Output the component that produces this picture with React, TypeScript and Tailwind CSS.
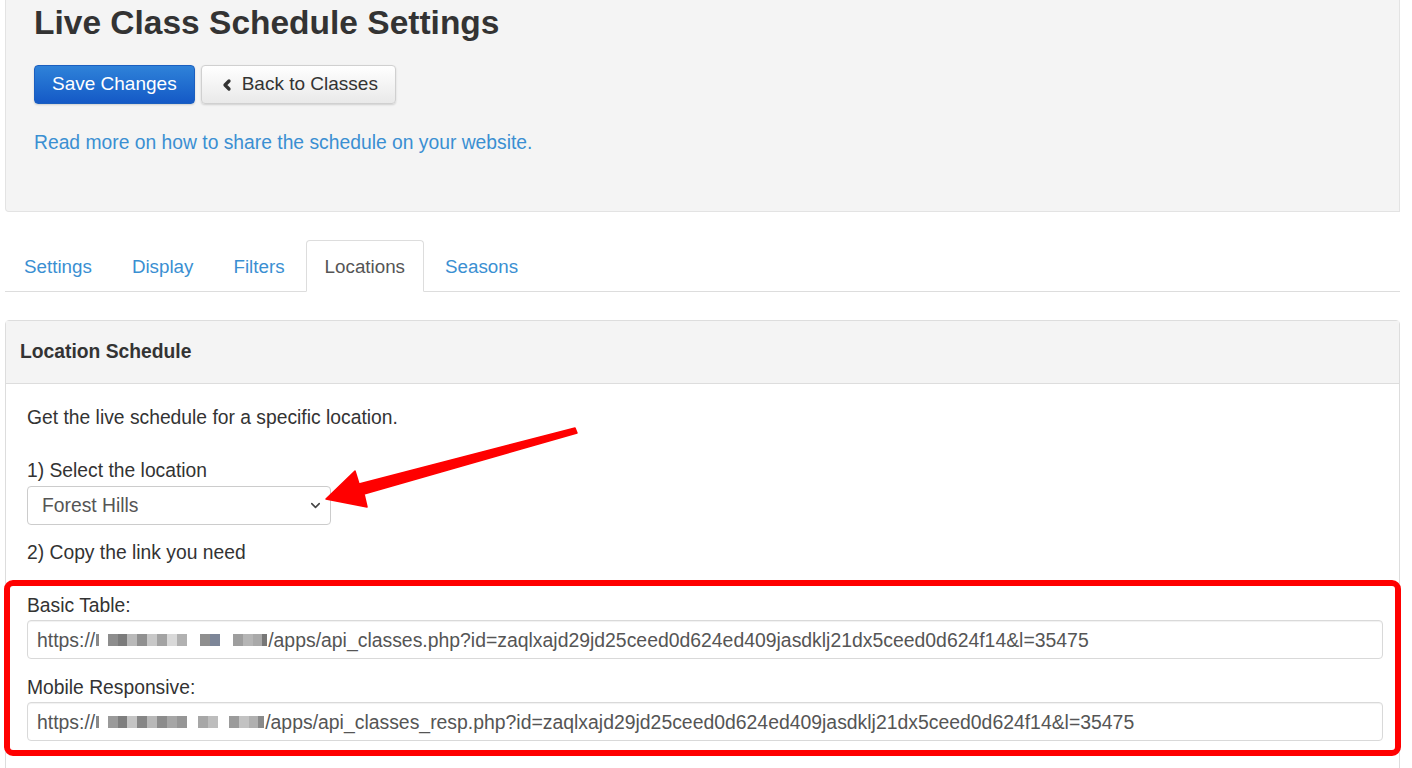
import React from 'react';
import { ChevronLeft, ChevronDown } from 'lucide-react';

const font = { fontFamily: '"Liberation Sans", Arial, sans-serif' };

// pixelated (redacted) domain part of the urls
const blurA: [number, string][] = [
  [3, '#8a8a8a'], [9, '#ffffff'], [10, '#8d8d8d'], [9, '#7b7b7b'], [10, '#b9b9b9'], [10, '#909090'],
  [10, '#c8c8c8'], [10, '#a3a3a3'], [10, '#d9d9d9'], [10, '#b1b1b1'], [13, '#ffffff'], [10, '#8f8f8f'],
  [10, '#7d8698'], [13, '#ffffff'], [10, '#9e9e9e'], [10, '#b5b5b5'], [9, '#a9a9a9'], [5, '#777777'],
];
const blurB: [number, string][] = [
  [3, '#8a8a8a'], [9, '#ffffff'], [10, '#9a9a9a'], [9, '#7e7e7e'], [10, '#c4c4c4'], [10, '#868686'],
  [10, '#b8b8b8'], [10, '#8c8c8c'], [10, '#a6a6a6'], [10, '#969696'], [11, '#ffffff'], [10, '#a7a7a7'],
  [10, '#bdbdbd'], [11, '#ffffff'], [10, '#9b9b9b'], [10, '#c2c2c2'], [9, '#b0b0b0'], [6, '#8a8a8a'],
];

function Blur({ parts }: { parts: [number, string][] }) {
  return (
    <span className="inline-flex items-center h-[12px] align-middle mx-[1px]">
      {parts.map(([w, c], i) => (
        <span key={i} className="h-[12px] inline-block" style={{ width: w, background: c }} />
      ))}
    </span>
  );
}

function UrlField({ parts, rest }: { parts: [number, string][]; rest: string }) {
  return (
    <div className="h-[39px] w-full border border-[#d9d9d9] rounded-[4px] bg-white flex items-center pl-[9px] text-[19.4px] text-[#555] whitespace-nowrap overflow-hidden shadow-[inset_0_1px_1px_rgba(0,0,0,0.06)]">
      <span>https://</span>
      <Blur parts={parts} />
      <span>{rest}</span>
    </div>
  );
}

export default function App() {
  const tabs = ['Settings', 'Display', 'Filters', 'Locations', 'Seasons'];

  return (
    <div className="relative w-full min-h-[768px] bg-white overflow-hidden" style={font}>
      <div className="ml-[5px] w-[1395px]">
        {/* Header */}
        <div className="bg-[#f4f4f4] border-l border-r border-b border-[#e3e3e3] rounded-bl-[4px] pl-[28px] pt-[3px] h-[212px]">
          <h1 className="text-[33.5px] leading-[40px] font-bold text-[#333]">Live Class Schedule Settings</h1>
          <div className="flex gap-[6px] mt-[22px]">
            <button className="h-[39px] px-[17px] rounded-[4px] text-white text-[19px] border border-[#1b5fbf] bg-gradient-to-b from-[#2f82d9] to-[#1559c6] shadow-[0_1px_2px_rgba(0,0,0,0.15)]">
              Save Changes
            </button>
            <button className="h-[39px] pl-[17px] pr-[17px] rounded-[4px] text-[#333] text-[19px] border border-[#d0d0d0] bg-gradient-to-b from-white to-[#e9e9e9] shadow-[0_1px_2px_rgba(0,0,0,0.15)] flex items-center gap-[7px]">
              <ChevronLeft size={16} strokeWidth={5} className="text-[#333]" />
              <span>Back to Classes</span>
            </button>
          </div>
          <a className="block mt-[28px] text-[19.3px] leading-[22px] text-[#3a8fd2]">
            Read more on how to share the schedule on your website.
          </a>
        </div>

        {/* Tabs */}
        <div className="mt-[28px] flex border-b border-[#dddddd] h-[52px]">
          {tabs.map((t) => (
            <div
              key={t}
              className={
                t === 'Locations'
                  ? 'px-[18px] pt-[3px] mr-[2px] flex items-center text-[18.8px] text-[#555] bg-white border border-[#dddddd] border-b-white rounded-t-[4px] -mb-px'
                  : 'px-[18px] pt-[3px] mr-[2px] flex items-center text-[18.8px] text-[#3a8fd2] border border-transparent'
              }
            >
              {t}
            </div>
          ))}
        </div>

        {/* Panel */}
        <div className="mt-[28px] border border-[#dddddd] rounded-t-[4px] min-h-[460px]">
          <div className="h-[63px] bg-[#f4f4f4] border-b border-[#dddddd] flex items-center pl-[14px] text-[19.3px] font-bold text-[#333]">
            Location Schedule
          </div>
          <div className="px-[21px] pt-[23px] text-[19.3px] leading-[22px] text-[#333]">
            <p>Get the live schedule for a specific location.</p>
            <p className="mt-[31px]">1) Select the location</p>
            <div className="mt-[4px] w-[304px] h-[39px] border border-[#cccccc] rounded-[4px] bg-white flex items-center justify-between pl-[14px] pr-[7px] text-[#555]">
              <span>Forest Hills</span>
              <ChevronDown size={15} strokeWidth={2.5} className="text-[#444]" />
            </div>
            <p className="mt-[17px]">2) Copy the link you need</p>

            <div className="mt-[16px] -mx-[23px] border-[6px] border-[#ff0000] rounded-[9px] pl-[17px] pr-[12px] pt-[9px] pb-[9px]">
              <p>Basic Table:</p>
              <div className="mt-[3px]">
                <UrlField
                  parts={blurA}
                  rest="/apps/api_classes.php?id=zaqlxajd29jd25ceed0d624ed409jasdklj21dx5ceed0d624f14&l=35475"
                />
              </div>
              <p className="mt-[18px]">Mobile Responsive:</p>
              <div className="mt-[3px]">
                <UrlField
                  parts={blurB}
                  rest="/apps/api_classes_resp.php?id=zaqlxajd29jd25ceed0d624ed409jasdklj21dx5ceed0d624f14&l=35475"
                />
              </div>
            </div>
          </div>
        </div>
      </div>

      {/* Red annotation arrow */}
      <svg className="absolute left-0 top-0 pointer-events-none" width="1412" height="768" viewBox="0 0 1412 768">
        <polygon
          points="326,499 355,471 359,484 575,428 577,433 364,494 367,507"
          fill="#ff0000"
          stroke="#ff0000"
          strokeWidth="1.5"
          strokeLinejoin="round"
        />
      </svg>
    </div>
  );
}
